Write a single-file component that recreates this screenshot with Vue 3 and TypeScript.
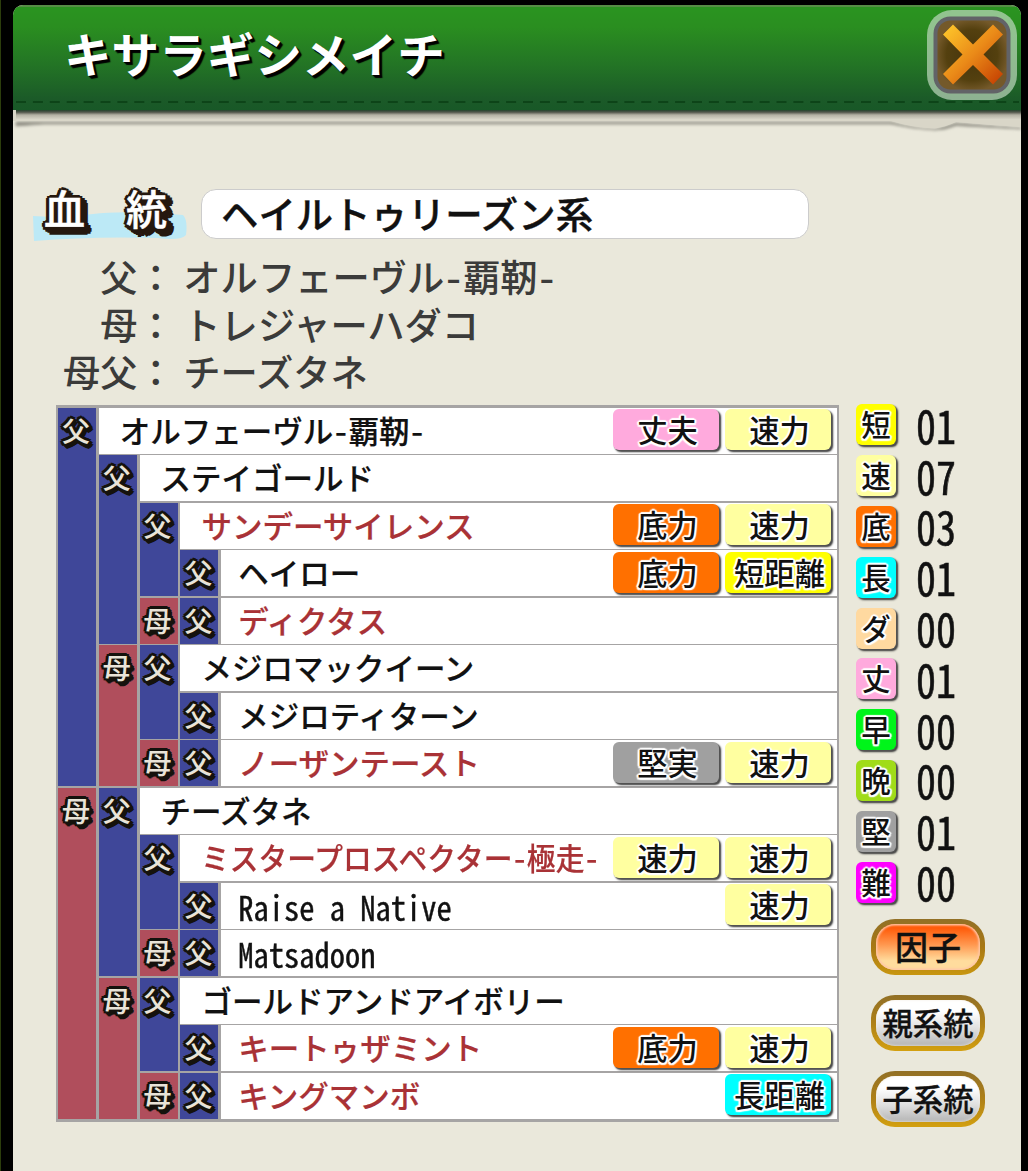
<script setup lang="ts">
type Kind = 'sprint' | 'speed' | 'power' | 'long' | 'dirt' | 'tough' | 'early' | 'late' | 'solid' | 'hard'

interface Chip { label: string; kind: Kind }
interface Ancestor { name: string; col: number; red?: boolean; fit?: 'squeezed' | 'latin'; chips: Chip[] }
interface Mark { sex: '父' | '母'; col: number; row: number; span: number }
interface Stat { label: string; kind: Kind; value: string }

const title = 'キサラギシメイチ'
const lineage = 'ヘイルトゥリーズン系'

const parents = [
  { label: '父：', name: 'オルフェーヴル-覇靭-' },
  { label: '母：', name: 'トレジャーハダコ' },
  { label: '母父：', name: 'チーズタネ' },
]

const speed: Chip = { label: '速力', kind: 'speed' }
const power: Chip = { label: '底力', kind: 'power' }

const ancestors: Ancestor[] = [
  { name: 'オルフェーヴル-覇靭-', col: 2, chips: [{ label: '丈夫', kind: 'tough' }, speed] },
  { name: 'ステイゴールド', col: 3, chips: [] },
  { name: 'サンデーサイレンス', col: 4, red: true, chips: [power, speed] },
  { name: 'ヘイロー', col: 5, chips: [power, { label: '短距離', kind: 'sprint' }] },
  { name: 'ディクタス', col: 5, red: true, chips: [] },
  { name: 'メジロマックイーン', col: 4, chips: [] },
  { name: 'メジロティターン', col: 5, chips: [] },
  { name: 'ノーザンテースト', col: 5, red: true, chips: [{ label: '堅実', kind: 'solid' }, speed] },
  { name: 'チーズタネ', col: 3, chips: [] },
  { name: 'ミスタープロスペクター-極走-', col: 4, red: true, fit: 'squeezed', chips: [speed, speed] },
  { name: 'Raise a Native', col: 5, fit: 'latin', chips: [speed] },
  { name: 'Matsadoon', col: 5, fit: 'latin', chips: [] },
  { name: 'ゴールドアンドアイボリー', col: 4, chips: [] },
  { name: 'キートゥザミント', col: 5, red: true, chips: [power, speed] },
  { name: 'キングマンボ', col: 5, red: true, chips: [{ label: '長距離', kind: 'long' }] },
]

const mark = (sex: '父' | '母', col: number, row: number, span = 1): Mark => ({ sex, col, row, span })

const marks: Mark[] = [
  mark('父', 1, 1, 8), mark('母', 1, 9, 7),
  mark('父', 2, 2, 4), mark('母', 2, 6, 3), mark('父', 2, 9, 4), mark('母', 2, 13, 3),
  mark('父', 3, 3, 2), mark('母', 3, 5), mark('父', 3, 6, 2), mark('母', 3, 8),
  mark('父', 3, 10, 2), mark('母', 3, 12), mark('父', 3, 13, 2), mark('母', 3, 15),
  mark('父', 4, 4), mark('父', 4, 5), mark('父', 4, 7), mark('父', 4, 8),
  mark('父', 4, 11), mark('父', 4, 12), mark('父', 4, 14), mark('父', 4, 15),
]

const stats: Stat[] = [
  { label: '短', kind: 'sprint', value: '01' },
  { label: '速', kind: 'speed', value: '07' },
  { label: '底', kind: 'power', value: '03' },
  { label: '長', kind: 'long', value: '01' },
  { label: 'ダ', kind: 'dirt', value: '00' },
  { label: '丈', kind: 'tough', value: '01' },
  { label: '早', kind: 'early', value: '00' },
  { label: '晩', kind: 'late', value: '00' },
  { label: '堅', kind: 'solid', value: '01' },
  { label: '難', kind: 'hard', value: '00' },
]

const modes = ['因子', '親系統', '子系統']
</script>

<template>
  <div class="screen">
    <div class="panel">
      <header class="header">
        <h1 class="title">{{ title }}</h1>
        <button class="close" aria-label="close">
          <svg width="90" height="92" viewBox="0 0 90 92">
            <defs>
              <linearGradient id="cross" x1="0" y1="0" x2="1" y2="1">
                <stop offset="0" stop-color="#ffcb2c" />
                <stop offset=".5" stop-color="#ea8a18" />
                <stop offset="1" stop-color="#c23a00" />
              </linearGradient>
              <radialGradient id="well">
                <stop offset="0" stop-color="#45340c" />
                <stop offset=".7" stop-color="#54400f" />
                <stop offset="1" stop-color="#74592a" />
              </radialGradient>
            </defs>
            <rect x="0" y="1" width="90" height="90" rx="25" fill="#c4dcc4" fill-opacity=".68" />
            <rect x="8.500" y="9.500" width="73" height="73" rx="15" fill="url(#well)" stroke="#626367" stroke-width="4" />
            <path d="M26 15.500 46 35.500 66 15.500 76 25.500 56.500 45.500 76 65 66 75.500 46 56 26 75.500 16 65 35.500 45.500 16 25.500Z" fill="url(#cross)" />
          </svg>
        </button>
        <svg class="stitch" width="1008" height="2"><path d="M3 1H1006" stroke="#0d4418" stroke-width="2" stroke-dasharray="10 6.900" /></svg>
      </header>
      <svg class="torn" width="1008" height="30" viewBox="0 0 1008 30">
        <defs>
          <linearGradient id="cast" x1="0" y1="0" x2="0" y2="1">
            <stop offset="0" stop-color="#23432b" />
            <stop offset=".25" stop-color="#55584d" />
            <stop offset=".55" stop-color="#b3b0a3" />
            <stop offset="1" stop-color="#d5d2c4" />
          </linearGradient>
          <filter id="soft" x="-2%" y="-50%" width="104%" height="220%"><feGaussianBlur stdDeviation="1.500" /></filter>
        </defs>
        <path d="M3 12 H878 Q905 19 922 19 Q932 17 943 13 L1008 18 V19 L943 15.500 Q932 20 922 20 Q900 19 878 14 H30 L3 16Z" fill="#8b897f" stroke="#a19f94" stroke-width="1" filter="url(#soft)" />
        <path d="M0 0H1008V17Q975 15 943 12 Q932 17 922 18.500 Q900 18 878 11 H0Z" fill="#d9d6c8" />
        <rect x="3" y="0" width="1005" height="9" fill="url(#cast)" />
      </svg>

      <section class="lineage">
        <div class="heading">
          <svg class="brush" width="154" height="30" viewBox="0 0 154 30"><path d="M0 4Q30 6 60 2T150 3Q155 8 153 23Q148 29 125 26Q60 24 1 29Z" fill="#bce9f6" /></svg>
          <span class="heading-char">血</span><span class="heading-char second">統</span>
        </div>
        <div class="lineage-box">{{ lineage }}</div>
      </section>

      <dl class="parents">
        <div v-for="p in parents" :key="p.label" class="parent">
          <dt>{{ p.label }}</dt>
          <dd>{{ p.name }}</dd>
        </div>
      </dl>

      <main class="body">
        <div class="tree">
          <div
            v-for="(m, i) in marks"
            :key="'m' + i"
            class="mark"
            :class="m.sex === '父' ? 'sire' : 'dam'"
            :style="{ gridColumn: m.col, gridRow: m.row + ' / span ' + m.span }"
          ><span>{{ m.sex }}</span></div>
          <div
            v-for="(a, i) in ancestors"
            :key="a.name + i"
            class="ancestor"
            :class="{ red: a.red, deep: a.col > 3, deepest: a.col === 5 }"
            :style="{ gridColumn: a.col + ' / 6', gridRow: i + 1 }"
          >
            <span class="name" :class="a.fit">{{ a.name }}</span>
            <span v-for="(c, j) in a.chips" :key="j" class="chip" :class="c.kind">{{ c.label }}</span>
          </div>
        </div>

        <aside class="side">
          <div class="stats">
            <div v-for="s in stats" :key="s.label" class="stat">
              <span class="tile" :class="s.kind">{{ s.label }}</span>
              <span class="value">{{ s.value }}</span>
            </div>
          </div>
          <div class="modes">
            <button v-for="(m, i) in modes" :key="m" class="mode" :class="{ active: i === 0 }"><span>{{ m }}</span></button>
          </div>
        </aside>
      </main>
    </div>
  </div>
</template>

<style>
body {
  margin: 0;
  background: #000;
}
</style>

<style scoped>
.screen {
  box-sizing: border-box;
  width: 1028px;
  height: 1171px;
  padding: 5px 7px 0 12px;
  overflow: hidden;
  background: #000;
  border-left: 1px solid #2c3d0c;
  font-family: "Noto Sans CJK JP", sans-serif;
  font-feature-settings: "hwid";
  font-weight: 500;
  color: #111;
}
.panel {
  height: 1166px;
  overflow: hidden;
  border-radius: 10px 10px 0 0;
  background: #eae8db;
}
.header {
  position: relative;
  box-sizing: border-box;
  display: flex;
  align-items: center;
  justify-content: space-between;
  height: 105px;
  padding: 0 4px 7px 51px;
  border-top: 2px solid #568e46;
  background: linear-gradient(#2a9420 0, #2a8e20 20px, #237425 58px, #1b5a28 92px, #185827 100%);
}
.title {
  margin: 0 0 4px;
  font-size: 47.600px;
  line-height: 70px;
  font-weight: 700;
  color: #fff;
  text-shadow: 1px 1px 0 #000, 2px 2px 1px #000, 3px 3px 1px #000;
}
.close {
  display: flex;
  padding: 0;
  border: 0;
  background: none;
}
.stitch {
  position: absolute;
  left: 0;
  bottom: 7px;
}
.torn {
  display: block;
}
.lineage {
  display: flex;
  align-items: center;
  margin-top: 49px;
  padding-left: 20px;
  height: 50px;
}
.heading {
  position: relative;
  display: flex;
  width: 168px;
  height: 50px;
}
.brush {
  position: absolute;
  left: 0;
  top: 23px;
}
.heading-char {
  position: relative;
  margin-left: 11px;
  width: 41px;
  height: 44px;
  font-size: 41px;
  line-height: 36px;
  font-weight: 500;
  color: #fff;
  -webkit-text-stroke: .5px #fff;
  text-shadow:
    3.500px 0 #25180f, -3.500px 0 #25180f, 0 3.500px #25180f, 0 -3.500px #25180f,
    2.500px 2.500px #25180f, -2.500px 2.500px #25180f, 2.500px -2.500px #25180f, -2.500px -2.500px #25180f,
    5px 0 #25180f, 7px 2px #25180f, 8px 5px #25180f, 7px 7px #25180f,
    5px 4px #25180f, 2px 6px #25180f, 4px 8px #25180f, 0 5px #25180f;
}
.second {
  margin-left: 41px;
}
.lineage-box {
  box-sizing: border-box;
  width: 608px;
  height: 50px;
  padding-left: 19px;
  border: 1px solid #ccc;
  border-radius: 15px;
  background: #fff;
  font-size: 37.400px;
  line-height: 46px;
  -webkit-text-stroke: .4px #111;
}
.parents {
  margin: 14px 0 0 50px;
}
.parent {
  display: flex;
  height: 47.500px;
  font-size: 37.300px;
  line-height: 47.500px;
  color: #3b3b3a;
}
.parent dt {
  width: 111.300px;
  font-size: 37.100px;
  text-align: right;
  font-feature-settings: normal;
}
.parent dd {
  margin: 0 0 0 9px;
}
.body {
  display: flex;
  margin: 9px 0 0 43px;
}
.tree {
  box-sizing: border-box;
  display: grid;
  grid-template-columns: repeat(4, 38px) 1fr;
  grid-template-rows: repeat(15, 46px);
  gap: 1.500px 2.800px;
  width: 783px;
  height: 717px;
  padding: 3px 2.500px 3px 2px;
  background: #a6a4a4;
}
.mark {
  display: flex;
  justify-content: center;
}
.mark span {
  height: 46px;
  margin-left: -2px;
  font-size: 28px;
  line-height: 45px;
  color: #e9e4d8;
  text-shadow:
    3px 0 #15120d, -3px 0 #15120d, 0 3px #15120d, 0 -3px #15120d,
    2.200px 2.200px #15120d, -2.200px 2.200px #15120d, 2.200px -2.200px #15120d, -2.200px -2.200px #15120d,
    4px 1px #15120d, 3.500px 3.500px #15120d, 1px 4px #15120d, 4.500px 2.500px #15120d, 2px 4.500px #15120d;
}
.sire {
  background: #3f4799;
}
.dam {
  background: #b04e5c;
}
.ancestor {
  display: flex;
  align-items: center;
  gap: 6px;
  padding: 0 5.500px 0 21px;
  background: #fff;
}
.deep {
  padding-left: 21px;
}
.deepest {
  padding-left: 17px;
}
.name {
  flex: 1;
  min-width: 0;
  height: 46px;
  font-size: 30.500px;
  line-height: 44.500px;
  white-space: nowrap;
  -webkit-text-stroke: .2px currentColor;
}
.squeezed {
  transform: scaleX(.943);
  transform-origin: left;
}
.latin {
  font-weight: 400;
  line-height: 46px;
  transform: scaleY(1.120);
  -webkit-text-stroke: .4px #111;
}
.red {
  color: #a93236;
}
.chip,
.tile {
  box-sizing: border-box;
  flex: none;
  border-radius: 6px;
  color: #111;
  text-align: center;
  font-size: 30.300px;
  box-shadow: 1px 1px 1px #555, 2px 2px 2px #333;
  text-shadow:
    2px 0 1px #fff, -2px 0 1px #fff, 0 2px 1px #fff, 0 -2px 1px #fff,
    1.500px 1.500px 1px #fff, -1.500px -1.500px 1px #fff, 1.500px -1.500px 1px #fff, -1.500px 1.500px 1px #fff;
}
.chip {
  width: 106px;
  height: 41px;
  margin-top: -2px;
  padding-left: 3px;
  line-height: 40px;
}
.sprint { background: #ffff00; }
.speed { background: #ffffa0; }
.power { background: #ff7000; }
.long { background: #00ffff; }
.dirt { background: #ffd9a0; }
.tough { background: #ffaadd; }
.early { background: #00f51a; }
.late { background: #a0dc18; }
.solid { background: #a0a0a0; }
.hard { background: #ff00ff; }
.side {
  width: 160px;
  padding-left: 17px;
}
.stat {
  display: flex;
  align-items: center;
  height: 50.800px;
}
.stats {
  margin-top: -5px;
}
.tile {
  width: 40px;
  height: 41px;
  line-height: 39px;
  font-size: 29.500px;
}
.value {
  margin: -2px 0 0 20px;
  font-size: 40px;
  font-weight: 400;
  line-height: 40px;
  transform: scaleY(1.150);
  -webkit-text-stroke: .5px #111;
}
.modes {
  display: flex;
  flex-direction: column;
  gap: 20px;
  margin: 12px 0 0 15px;
}
.mode {
  box-sizing: border-box;
  display: flex;
  justify-content: center;
  width: 114px;
  height: 56px;
  padding: 0;
  border: 5px solid transparent;
  border-radius: 24px;
  background:
    linear-gradient(#fff 25%, #ddd 65%, #b4b4b4) padding-box,
    linear-gradient(#927026, #ae8018 50%, #d3a010) border-box;
  box-shadow: inset 0 0 3px #f3eee6;
  font: 500 30.300px/44px "Noto Sans CJK JP", sans-serif;
  color: #111;
  white-space: nowrap;
  -webkit-text-stroke: .3px #111;
}
.active {
  font-size: 33px;
  background:
    linear-gradient(#ff5a08 8%, #ff9850 45%, #ffdc9d 80%) padding-box,
    linear-gradient(#927026, #a87814 50%, #c89610) border-box;
  box-shadow: inset 0 0 2px 1.500px #ffc6a6;
}
</style>
